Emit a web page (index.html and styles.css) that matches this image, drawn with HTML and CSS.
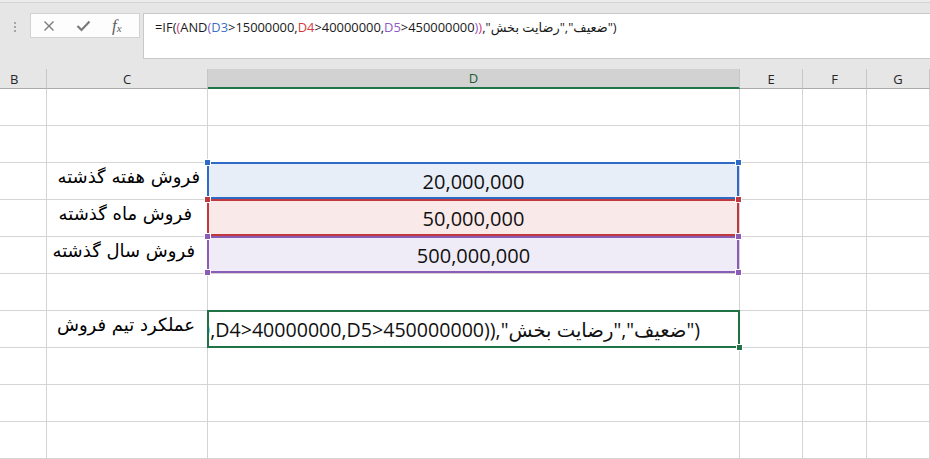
FILE: index.html
```html
<!DOCTYPE html>
<html lang="fa">
<head>
  <meta charset="UTF-8" />
  <meta name="viewport" content="width=device-width, initial-scale=1.0"/>
  <title>Sales Performance</title>
  <link rel="stylesheet" href="styles.css">
</head>
<body>
  <div class="formula-bar">
    <div class="grip"><span></span><span></span><span></span></div>
    <div class="fx-tools">
      <svg class="tool" width="12" height="12" viewBox="0 0 12 12"><path d="M1.5 1.5L10.5 10.5M10.5 1.5L1.5 10.5"/></svg>
      <svg class="tool check" width="15" height="12" viewBox="0 0 15 12"><path d="M1.5 6L5.5 10L13.5 1.5"/></svg>
      <span class="fx">f<sub>x</sub></span>
    </div>
    <div class="formula-input">=IF<span class="p1">(</span><span class="p2">(</span>AND<span class="p3">(</span><span class="r-blue">D3</span>&gt;15000000,<span class="r-red">D4</span>&gt;40000000,<span class="r-purple">D5</span>&gt;450000000<span class="p3">)</span><span class="p2">)</span>,"<bdi>رضایت بخش</bdi>","<bdi>ضعیف</bdi>")</div>
  </div>

  <div class="sheet">
    <!-- column headers -->
    <div class="hd col-b">B</div>
    <div class="hd">C</div>
    <div class="hd sel">D</div>
    <div class="hd">E</div>
    <div class="hd">F</div>
    <div class="hd">G</div>

    <!-- row 1 -->
    <div class="c"></div><div class="c"></div><div class="c"></div><div class="c"></div><div class="c"></div><div class="c"></div>
    <!-- row 2 -->
    <div class="c"></div><div class="c"></div><div class="c"></div><div class="c"></div><div class="c"></div><div class="c"></div>
    <!-- row 3 -->
    <div class="c"></div>
    <div class="c lbl">فروش هفته گذشته</div>
    <div class="c num ref blue">20,000,000<i class="h tl"></i><i class="h tr"></i></div>
    <div class="c"></div><div class="c"></div><div class="c"></div>
    <!-- row 4 -->
    <div class="c"></div>
    <div class="c lbl pad-lg">فروش ماه گذشته</div>
    <div class="c num ref red">50,000,000<i class="h tl"></i><i class="h tr"></i></div>
    <div class="c"></div><div class="c"></div><div class="c"></div>
    <!-- row 5 -->
    <div class="c"></div>
    <div class="c lbl pad-md">فروش سال گذشته</div>
    <div class="c num ref purple">500,000,000<i class="h tl"></i><i class="h tr"></i><i class="h bl"></i><i class="h br"></i></div>
    <div class="c"></div><div class="c"></div><div class="c"></div>
    <!-- row 6 -->
    <div class="c"></div><div class="c"></div><div class="c"></div><div class="c"></div><div class="c"></div><div class="c"></div>
    <!-- row 7 -->
    <div class="c"></div>
    <div class="c lbl pad-md">عملکرد تیم فروش</div>
    <div class="c active">
      <div class="edit"><span>=IF((AND(D3&gt;15000000,D4&gt;40000000,D5&gt;450000000)),"<bdi>رضایت بخش</bdi>","<bdi>ضعیف</bdi>")</span></div>
      <i class="fill"></i>
    </div>
    <div class="c"></div><div class="c"></div><div class="c"></div>
    <!-- row 8 -->
    <div class="c"></div><div class="c"></div><div class="c"></div><div class="c"></div><div class="c"></div><div class="c"></div>
    <!-- row 9 -->
    <div class="c"></div><div class="c"></div><div class="c"></div><div class="c"></div><div class="c"></div><div class="c"></div>
    <!-- row 10 -->
    <div class="c"></div><div class="c"></div><div class="c"></div><div class="c"></div><div class="c"></div><div class="c"></div>
  </div>
</body>
</html>
```

FILE: styles.css
```css
* {
  box-sizing: border-box;
}

body {
  margin: 0;
  background: #ffffff;
  font-family: 'Open Sans', 'DejaVu Sans', sans-serif;
  color: #000000;
  overflow: hidden;
}

/* formula bar */
.formula-bar {
  display: flex;
  align-items: flex-start;
  height: 69px;
  padding-top: 13px;
  background: linear-gradient(#ececec 0, #ececec 2px, #d4d4d4 2px, #d4d4d4 3px, #e6e6e6 3px);
}

.grip {
  display: flex;
  flex-direction: column;
  gap: 2px;
  margin: 9px 0 0 14px;
}

.grip span {
  width: 2px;
  height: 2px;
  background: #a6a6a6;
}

.fx-tools {
  display: flex;
  align-items: center;
  gap: 21px;
  width: 110px;
  height: 25px;
  margin-left: 14px;
  padding-left: 12px;
  background: #fdfdfd;
  border: 1px solid #d2d2d2;
}

.tool path {
  fill: none;
  stroke: #7a7a7a;
  stroke-width: 1.4;
}

.tool.check path {
  stroke-width: 2.2;
}

.fx {
  font-family: 'Liberation Serif', serif;
  font-style: italic;
  font-size: 17px;
  color: #5e5e5e;
  line-height: 1;
}

.fx sub {
  font-size: 11px;
  vertical-align: -1px;
}

.formula-input {
  flex: 1;
  height: 46px;
  margin-left: 3px;
  margin-right: -4px;
  padding: 4px 0 0 11px;
  background: #ffffff;
  border: 1px solid #c8c8c8;
  font-size: 12.9px;
  line-height: 18px;
  color: #1a1a1a;
  white-space: nowrap;
}

.p2 { color: #d4367a; }
.p3 { color: #8b5bc4; }
.r-blue { color: #3a6fc4; }
.r-red { color: #d23b3b; }
.r-purple { color: #8b5bc4; }

/* sheet grid */
.sheet {
  display: grid;
  grid-template-columns: 47px 161px 532px 63px 64px 63px;
  grid-template-rows: 20px repeat(10, 37px);
}

.hd {
  display: flex;
  align-items: center;
  justify-content: center;
  background: #e6e6e6;
  border-right: 1px solid #c6c6c6;
  border-bottom: 1px solid #ababab;
  font-size: 13px;
  color: #262626;
}

.hd.col-b {
  justify-content: flex-start;
  padding-left: 10px;
}

.hd.sel {
  background: #d2d2d2;
  border-bottom: 2px solid #217346;
  color: #1d5c37;
}

.c {
  border-right: 1px solid #d4d4d4;
  border-bottom: 1px solid #d4d4d4;
}

.lbl {
  display: flex;
  align-items: center;
  direction: rtl;
  padding: 0 7px 9px 0;
  font-family: 'DejaVu Sans', sans-serif;
  font-size: 18px;
  white-space: nowrap;
}

.lbl.pad-lg { padding-right: 15px; }
.lbl.pad-md { padding-right: 12px; }

.num {
  display: flex;
  align-items: center;
  justify-content: center;
  font-size: 20px;
  color: #111111;
}

/* coloured reference ranges */
.ref {
  position: relative;
}

.ref.blue { --c: #2f6ac6; background: #e8eef8; }
.ref.red { --c: #c0393f; background: #f9e9e9; }
.ref.purple { --c: #8a5cb8; background: #f0ecf7; }

.ref::after {
  content: "";
  position: absolute;
  top: -1px;
  left: -1px;
  right: 0;
  bottom: 0;
  border: 2px solid var(--c);
  z-index: 1;
}

.h {
  position: absolute;
  width: 7px;
  height: 7px;
  background: var(--c);
  border: 1px solid #ffffff;
  z-index: 2;
}

.h.tl { top: -4px; left: -4px; }
.h.tr { top: -4px; right: -3px; }
.h.bl { bottom: -3px; left: -4px; }
.h.br { bottom: -3px; right: -3px; }

/* active cell being edited */
.active {
  position: relative;
}

.active::after {
  content: "";
  position: absolute;
  top: -1px;
  left: -1px;
  right: -1px;
  bottom: -1px;
  border: 2px solid #217346;
  z-index: 1;
}

.edit {
  display: flex;
  align-items: center;
  justify-content: flex-end;
  height: 100%;
  padding-right: 39px;
  overflow: hidden;
  font-size: 19.6px;
  white-space: nowrap;
  color: #111111;
}

.edit span {
  flex: none;
}

.fill {
  position: absolute;
  right: -4px;
  bottom: -4px;
  width: 7px;
  height: 7px;
  background: #217346;
  border: 1px solid #ffffff;
  z-index: 2;
}
```
